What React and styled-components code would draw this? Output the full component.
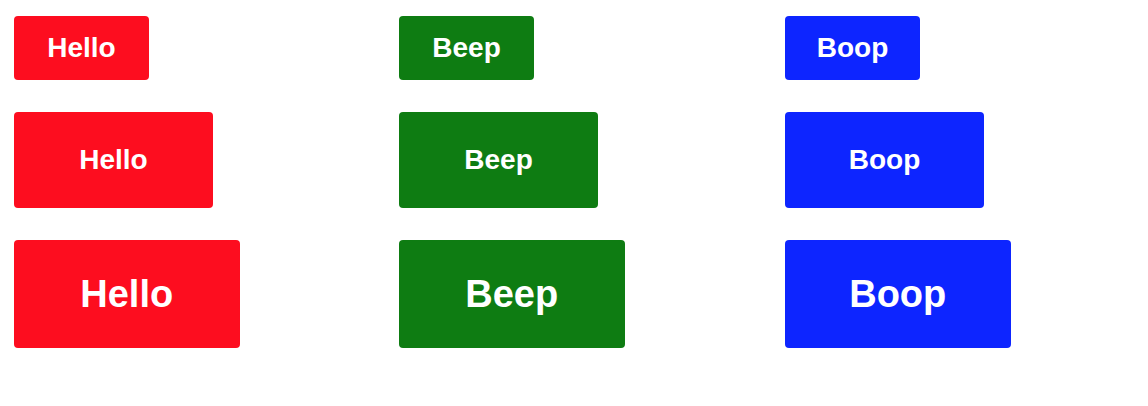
import React from "react";
import styled, { createGlobalStyle, css } from "styled-components";

const Global = createGlobalStyle`
  html, body { margin: 0; padding: 0; background: #ffffff; }
  body { font-family: "Liberation Sans", Arial, Helvetica, sans-serif; }
`;

const Page = styled.div`
  display: grid;
  grid-template-columns: 385px 386px 1fr;
  row-gap: 32px;
  padding: 16px 14px;
  align-items: start;
  justify-items: start;
`;

const sizes = {
  small: css`
    width: 135px;
    height: 64px;
    font-size: 28px;
  `,
  medium: css`
    width: 199px;
    height: 96px;
    font-size: 28px;
  `,
  large: css`
    width: 225.5px;
    height: 108px;
    font-size: 38px;
  `,
};

const Button = styled.button`
  display: flex;
  align-items: center;
  justify-content: center;
  box-sizing: border-box;
  border: none;
  border-radius: 4px;
  padding: 0;
  margin: 0;
  font-family: "Liberation Sans", Arial, Helvetica, sans-serif;
  font-weight: 700;
  color: #ffffff;
  background: ${(p) => p.$bg};
  cursor: pointer;
  ${(p) => sizes[p.$size]}
`;

const variants = [
  { label: "Hello", bg: "#fd0d1f" },
  { label: "Beep", bg: "#0e7c12" },
  { label: "Boop", bg: "#0d25ff" },
];

export default function App() {
  return (
    <>
      <Global />
      <Page>
        {["small", "medium", "large"].map((size) =>
          variants.map((v) => (
            <Button key={size + v.label} $bg={v.bg} $size={size}>
              {v.label}
            </Button>
          ))
        )}
      </Page>
    </>
  );
}
